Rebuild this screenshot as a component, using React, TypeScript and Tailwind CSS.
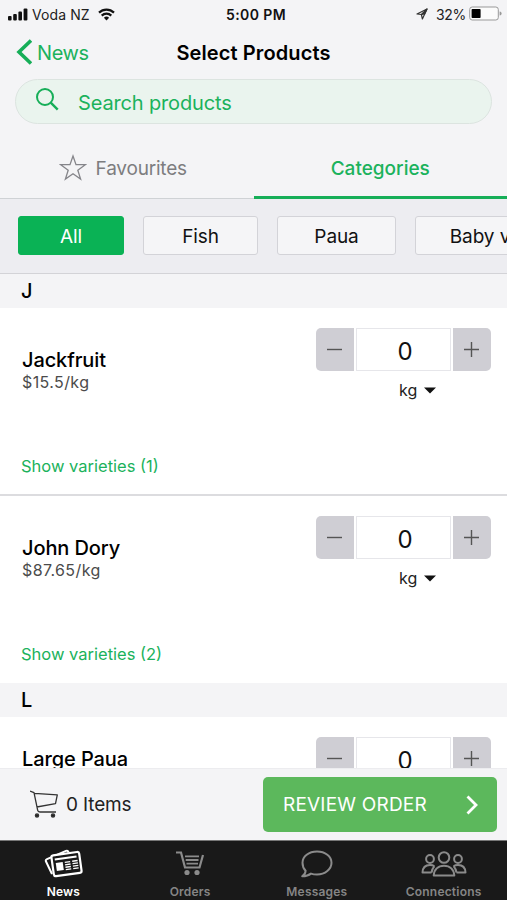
import { useState } from "react";
import { clsx } from "clsx";

interface Product {
  name: string;
  price?: string;
  unit?: string;
  varieties?: number;
}

interface Section {
  letter: string;
  products: Product[];
}

const SECTIONS: Section[] = [
  {
    letter: "J",
    products: [
      { name: "Jackfruit", price: "$15.5/kg", unit: "kg", varieties: 1 },
      { name: "John Dory", price: "$87.65/kg", unit: "kg", varieties: 2 },
    ],
  },
  { letter: "L", products: [{ name: "Large Paua" }] },
];

const CATEGORIES = [
  { label: "All", width: "w-[106px]" },
  { label: "Fish", width: "w-[115px]" },
  { label: "Paua", width: "w-[119px]" },
  { label: "Baby v", width: "w-[130px]" },
];

function StatusBar() {
  return (
    <div className="grid h-7 shrink-0 grid-cols-[1fr_auto_1fr] items-center px-2 text-[14px] text-[#222]">
      <div className="flex items-center">
        <svg width="20" height="13" viewBox="0 0 20 13" fill="#111">
          <rect x="0" y="8" width="3.6" height="4.5" rx="1" />
          <rect x="5.2" y="6" width="3.6" height="6.5" rx="1" />
          <rect x="10.4" y="3.5" width="3.6" height="9" rx="1" />
          <rect x="15.6" y="0.5" width="3.8" height="12" rx="1" />
        </svg>
        <span className="ml-1 tracking-[0.1px]">Voda NZ</span>
        <svg className="ml-2" width="17" height="13" viewBox="0 0 17 13" fill="none" stroke="#111" strokeWidth="2.2">
          <path d="M1 4.6a10.8 10.8 0 0 1 15 0" />
          <path d="M3.7 7.6a7 7 0 0 1 9.6 0" />
          <path d="M8.5 12.4 5.9 9.8a3.8 3.8 0 0 1 5.2 0z" fill="#111" stroke="none" />
        </svg>
      </div>
      <span className="pl-[5px] font-semibold tracking-[0.4px] text-[#111]">5:00 PM</span>
      <div className="flex items-center justify-end">
        <svg width="12" height="12" viewBox="0 0 12 12" fill="none" stroke="#333" strokeWidth="1.2" strokeLinejoin="round">
          <path d="M11 1 1 6l4.4.5L6.4 11z" />
          <path d="M11 1 5.4 6.5 8.6 6z" fill="#333" />
        </svg>
        <span className="ml-2 tracking-[-0.3px]">32%</span>
        <svg className="ml-[3px] -mr-[3px]" width="33" height="16" viewBox="0 0 33 16">
          <rect x="0.7" y="1" width="28.6" height="13" rx="2.5" fill="#fbfbfb" stroke="#999" />
          <rect x="2.6" y="3" width="9" height="9" rx="0.8" fill="#000" />
          <path d="M30.6 5.5v4a2 2 0 0 0 0-4z" fill="#999" />
        </svg>
      </div>
    </div>
  );
}

function Header() {
  return (
    <div className="grid h-12 shrink-0 grid-cols-[1fr_auto_1fr] items-center px-4">
      <button type="button" className="flex items-center gap-[5px] text-[20px] text-[#1bb25c]">
        <svg width="16" height="26" viewBox="0 0 16 26" fill="none" stroke="#16ae58" strokeWidth="3.6">
          <path d="M15 1.5 3 13l12 11.5" />
        </svg>
        <span className="pt-px tracking-[-0.4px]">News</span>
      </button>
      <h1 className="pt-px text-[20px] font-semibold tracking-[0.1px] text-black">Select Products</h1>
    </div>
  );
}

function Stepper({ unit }: { unit?: string }) {
  const [count, setCount] = useState(0);

  return (
    <div className="flex w-[175px] flex-col">
      <div className="flex h-[43px] justify-between">
        <button
          type="button"
          onClick={() => setCount((c) => Math.max(0, c - 1))}
          className="flex w-[38px] items-center justify-center rounded-l-[5px] bg-[#cfced4]"
        >
          <svg className="-ml-0.5" width="15" height="15" viewBox="0 0 15 15" stroke="#555" strokeWidth="1.4">
            <path d="M0 7.5h15" />
          </svg>
        </button>
        <span className="flex w-[95px] items-center justify-center border-[1.5px] border-[#e6e6ea] bg-white pt-[5px] pl-[3px] text-[24px] text-[#111]">
          {count}
        </span>
        <button
          type="button"
          onClick={() => setCount((c) => c + 1)}
          className="flex w-[38px] items-center justify-center rounded-r-[5px] bg-[#cfced4]"
        >
          <svg className="-ml-0.5" width="15" height="15" viewBox="0 0 15 15" stroke="#555" strokeWidth="1.4">
            <path d="M0 7.5h15M7.5 0v15" />
          </svg>
        </button>
      </div>
      {unit && (
        <div className="mt-[7px] ml-[83px] flex h-6 items-center text-[16px] text-[#222]">
          {unit}
          <svg className="ml-[7px]" width="12" height="7" viewBox="0 0 12 7" fill="#111">
            <path d="M0 .5h12L6 6.5z" />
          </svg>
        </div>
      )}
    </div>
  );
}

function ProductRow({ product, divided }: { product: Product; divided: boolean }) {
  const hasDetails = !!product.varieties;

  return (
    <li
      className={clsx(
        "flex shrink-0 justify-between bg-white pt-5 pr-4 pl-[21px]",
        divided ? "h-[188px] border-b-2 border-[#dcdcdf]" : "h-[187px]",
      )}
    >
      <div className={hasDetails ? "pt-5" : "pt-2.5"}>
        <p className="pl-px text-[20px] leading-6 font-medium tracking-[-0.1px] text-black">{product.name}</p>
        {product.price && (
          <p className="pl-px text-[16px] leading-5 tracking-[0.4px] text-[#4b4b4b]">{product.price}</p>
        )}
        {hasDetails && (
          <button type="button" className="mt-16 block text-[16.5px] leading-5 text-[#1bb25c]">
            Show varieties ({product.varieties})
          </button>
        )}
      </div>
      <Stepper unit={product.unit} />
    </li>
  );
}

function CartIcon() {
  return (
    <svg width="28" height="29" viewBox="0 0 28 29" fill="none" stroke="#333" strokeWidth="1.3" strokeLinejoin="round">
      <path d="M0 1l4 1.6 3.7 17.8Q8 22 10 22h16M4.5 3.3l22.8 1.6-1.8 8.8L6.8 17" />
      <circle cx="7" cy="25.5" r="1.6" fill="#222" />
      <circle cx="23" cy="25.5" r="1.6" fill="#222" />
    </svg>
  );
}

function NewsIcon() {
  return (
    <svg className="ml-0.5" width="40" height="29" viewBox="0 0 40 29" fill="none" stroke="#fff">
      <path d="M8 25 2 12.5Q1.3 11 3 10.2L22 1.8q1.7-.7 2.6 1.6" strokeWidth="2" />
      <g transform="rotate(-8 23 15)">
        <rect x="8.5" y="4.5" width="28" height="21" rx="2" strokeWidth="2.2" fill="#191919" />
        <path d="M11.5 8.8h22" strokeWidth="2" />
        <rect x="12" y="12.5" width="7" height="8" fill="#fff" stroke="none" />
        <path d="M21 13h5.5M21 15.5h5.5M21 18h5.5M21 20.5h5.5M28.500 13H34M28.500 15.500H34M28.500 18H34M28.500 20.500H34" strokeWidth="1.3" />
      </g>
    </svg>
  );
}

function OrdersIcon() {
  return (
    <svg width="30" height="25" viewBox="0 0 30 25" fill="none" stroke="#8b8b8b" strokeWidth="2.2">
      <path d="M1 1.5h5l4 15h14.5L28 4" />
      <path d="M10 5.3h14M10.7 9h12.8M11.5 12.6h11.5" strokeWidth="1.8" />
      <circle cx="12" cy="21.5" r="2.6" fill="#8b8b8b" stroke="none" />
      <circle cx="22" cy="21.5" r="2.6" fill="#8b8b8b" stroke="none" />
    </svg>
  );
}

function MessagesIcon() {
  return (
    <svg width="33" height="28" viewBox="0 0 33 28" fill="none" stroke="#8b8b8b" strokeWidth="2" strokeLinejoin="round">
      <path d="M17 1.5c8.2 0 14.5 4.9 14.5 11.2S25.2 24.5 17 24.5c-2.2 0-4.2-.3-6-.9-2 1.6-5 2.600-8.800 2.700 2.200-1.500 3.400-3.300 3.400-5.600-2-2-3.100-4.800-3.100-8C2.500 6.400 8.800 1.500 17 1.500z" />
    </svg>
  );
}

function ConnectionsIcon() {
  return (
    <svg width="46" height="26" viewBox="0 0 46 26" fill="none" stroke="#8b8b8b" strokeWidth="2" strokeLinejoin="round">
      <circle cx="23" cy="6.5" r="5.3" />
      <path d="M12.7 24.5C13 18.6 17 14.7 23 14.7s10 3.9 10.3 9.8z" />
      <circle cx="9" cy="8" r="3.9" />
      <circle cx="37" cy="8" r="3.9" />
      <path d="M10.5 21.5H1.5C1.7 16.8 4.5 14 9 14c1.8 0 3.3.4 4.4 1.2M35.5 21.5h9C44.3 16.8 41.5 14 37 14c-1.8 0-3.3.4-4.4 1.2M10.5 21.5c.5-2.6 1.5-4.7 2.9-6.3M35.5 21.5c-.5-2.6-1.5-4.7-2.9-6.3" />
    </svg>
  );
}

const TABS = [
  { label: "News", icon: <NewsIcon /> },
  { label: "Orders", icon: <OrdersIcon /> },
  { label: "Messages", icon: <MessagesIcon /> },
  { label: "Connections", icon: <ConnectionsIcon /> },
];

export default function App() {
  const [category, setCategory] = useState("All");

  return (
    <div className="flex h-[900px] w-[507px] flex-col overflow-hidden bg-[#f4f4f6] font-[Inter,sans-serif]">
      <StatusBar />
      <Header />

      <div className="mx-[15px] mt-[3px] flex h-[45px] shrink-0 items-center rounded-full border border-[#dce4e0] bg-[#eaf4ee] pl-5">
        <svg className="-mt-1" width="23" height="23" viewBox="0 0 23 23" fill="none" stroke="#16ae58" strokeWidth="2">
          <circle cx="9" cy="9" r="8" />
          <path d="m14.7 14.7 7 7" strokeWidth="2.4" />
        </svg>
        <span className="ml-[19px] pt-0.5 text-[20px] tracking-[-0.15px] text-[#1bb25c]">Search products</span>
      </div>

      <div className="grid h-[75px] shrink-0 grid-cols-2 text-[19px]">
        <button type="button" className="flex items-center justify-center border-b border-[#cfd2d5] pr-2 pt-4 text-[#7d7d7f]">
          <svg className="mr-[9px] -mt-[3px]" width="28" height="27" viewBox="0 0 28 27" fill="none" stroke="#85858a" strokeWidth="1.3">
            <path d="m14 2 3 8.7h9.3l-7.5 5.5 2.8 8.9-7.6-5.4-7.6 5.4 2.8-8.9-7.5-5.500H11z" />
          </svg>
          <span className="pt-px tracking-[-0.2px]">Favourites</span>
        </button>
        <button type="button" className="flex items-center justify-center border-b-[3px] border-[#16ae58] pt-[19px] font-medium text-[#1bb25c]">
          Categories
        </button>
      </div>

      <div className="flex h-[75px] shrink-0 gap-[19px] overflow-hidden border-b-[1.5px] border-[#d3d3d7] bg-[#ededf1] pt-[17px] pl-[18px]">
        {CATEGORIES.map((c) => (
          <button
            key={c.label}
            type="button"
            onClick={() => setCategory(c.label)}
            className={clsx(
              "h-[39px] shrink-0 rounded-[3px] border pt-[3px] text-[19px] tracking-[-0.1px]",
              c.width,
              c.label === category
                ? "border-[#0ab255] bg-[#0ab255] text-white"
                : "border-[#d3d3d8] bg-[#f5f5f7] text-[#111]",
            )}
          >
            {c.label}
          </button>
        ))}
      </div>

      <div className="flex min-h-0 flex-1 flex-col overflow-hidden">
        {SECTIONS.map((section) => (
          <section key={section.letter} className="shrink-0">
            <h2 className="flex h-[34px] items-center bg-[#f4f4f6] pl-[21px] text-[20px] font-medium text-black">
              {section.letter}
            </h2>
            <ul>
              {section.products.map((p, i) => (
                <ProductRow key={p.name} product={p} divided={i < section.products.length - 1} />
              ))}
            </ul>
          </section>
        ))}
      </div>

      <div className="flex h-[72px] shrink-0 items-center border-t border-[#ececef] pr-2.5 pl-[30px] text-[19px] text-[#222]">
        <CartIcon />
        <span className="ml-2 pt-0.5 tracking-[-0.15px]">0 Items</span>
        <button
          type="button"
          className="ml-auto flex h-[55px] w-[234px] items-center justify-between rounded-[5px] bg-[#5cb85c] pr-[19px] pl-5 text-white"
        >
          <span className="pt-px tracking-[0.2px]">REVIEW ORDER</span>
          <svg width="12" height="20" viewBox="0 0 12 20" fill="none" stroke="#fff" strokeWidth="2.8">
            <path d="m1.5 1.5 8.5 8.5-8.5 8.5" />
          </svg>
        </button>
      </div>

      <nav className="grid h-[60px] shrink-0 grid-cols-4 border-t border-[#777] bg-[#191919]">
        {TABS.map((tab, i) => (
          <button
            key={tab.label}
            type="button"
            className={clsx(
              "flex flex-col items-center text-[12px] leading-4 font-semibold tracking-[0.2px]",
              i === 0 ? "text-white" : "text-[#858585]",
            )}
          >
            <span className="flex h-[43px] items-center pt-0.5">{tab.icon}</span>
            {tab.label}
          </button>
        ))}
      </nav>
    </div>
  );
}
